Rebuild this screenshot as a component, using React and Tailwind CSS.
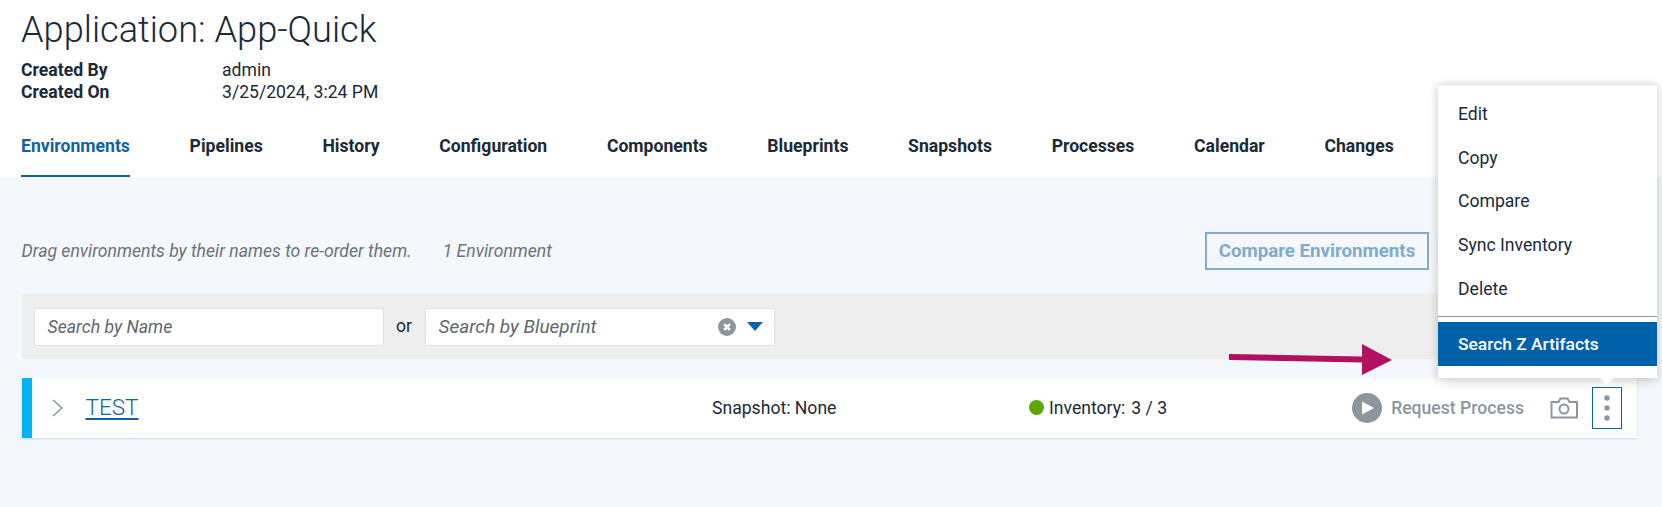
import React from 'react';

const tabs = ['Environments', 'Pipelines', 'History', 'Configuration', 'Components', 'Blueprints', 'Snapshots', 'Processes', 'Calendar', 'Changes'];
const menuItems = ['Edit', 'Copy', 'Compare', 'Sync Inventory', 'Delete'];

const Header = () => (
    <header className="h-[177px] bg-white pl-[21px] text-[#1a2a38]">
        <h1 className="pt-[8px] text-[36.200px] leading-[44px] font-light">Application: App-Quick</h1>
        <dl className="mt-[7px] grid grid-cols-[201px_1fr] text-[17.600px] leading-[22px]">
            <dt className="font-bold">Created By</dt>
            <dd>admin</dd>
            <dt className="font-bold">Created On</dt>
            <dd>3/25/2024, 3:24 PM</dd>
        </dl>
        <nav className="mt-[12px] flex gap-[59.700px]">
            {tabs.map((tab, i) => (
                <a
                    key={tab}
                    className={`flex h-[62px] items-center border-y-2 border-t-transparent text-[17.600px] font-bold ${i === 0 ? 'border-b-[#0f62a5] text-[#0f62a5]' : 'border-b-transparent'}`}
                >
                    {tab}
                </a>
            ))}
        </nav>
    </header>
);

const SearchBar = () => (
    <div className="mt-[24px] flex h-[65px] items-center bg-[#eeeeee] pl-[12px]">
        <div className="flex h-[38px] w-[350px] items-center border border-[#dfe3e6] bg-white pt-[2px] pl-[13px] text-[17.700px] text-[#5f676e] italic">
            Search by Name
        </div>
        <span className="w-[41px] text-center text-[17.600px] text-[#1a2a38]">or</span>
        <div className="flex h-[38px] w-[350px] items-center justify-between border border-[#dfe3e6] bg-white pr-[11px] pl-[13px] text-[19px] text-[#5f676e] italic">
            <span className="pt-[2px]">Search by Blueprint</span>
            <div className="flex items-center gap-[11px]">
                <svg width="18" height="18" viewBox="0 0 18 18">
                    <circle cx="9" cy="9" r="9" fill="#8d969e" />
                    <path d="M6.2 6.2l5.6 5.6M11.8 6.2l-5.6 5.6" stroke="#fff" strokeWidth="2.4" />
                </svg>
                <svg width="16" height="9" viewBox="0 0 16 9">
                    <path d="M0 0h16L8 9z" fill="#0f62a5" />
                </svg>
            </div>
        </div>
    </div>
);

const EnvironmentRow = () => (
    <div className="mt-[19px] flex h-[60px] items-center border-l-[10px] border-[#00b4ef] bg-white pr-[15px] text-[17.600px] text-[#1a2a38] shadow-[0_1px_2px_rgba(0,0,0,0.15)]">
        <div className="flex w-[680.500px] items-center">
            <svg className="ml-[20px]" width="12" height="18" viewBox="0 0 12 18" fill="none">
                <path d="M1 1l9 8-9 8" stroke="#8d969e" strokeWidth="1.5" />
            </svg>
            <a className="ml-[22px] text-[22.500px] font-light text-[#0f62a5] underline underline-offset-[3px]">TEST</a>
        </div>
        <div className="w-[317px]">Snapshot: None</div>
        <div className="flex items-center gap-[5px]">
            <span className="h-[15px] w-[15px] rounded-full bg-[#5ea700]" />
            <span>Inventory:<span className="ml-[6px]">3 / 3</span></span>
        </div>
        <div className="ml-auto flex items-center text-[#8d969e]">
            <svg width="30" height="30" viewBox="0 0 30 30">
                <circle cx="15" cy="15" r="15" fill="#8d969e" />
                <path d="M10 8.5l12 6.5-12 6.5z" fill="#fff" />
            </svg>
            <span className="ml-[9px] font-medium">Request Process</span>
            <svg className="ml-[26px]" width="28" height="22" viewBox="0 0 28 22" fill="none" stroke="#8d969e" strokeWidth="2">
                <path d="M1.5 5h7l2-3.500h7l2 3.500h7.500v15.500h-25.500z" />
                <circle cx="14" cy="12" r="4.500" />
            </svg>
            <button className="ml-[14px] flex h-[42px] w-[30px] items-center justify-center border-[1.5px] border-[#0f62a5]">
                <svg width="6" height="26" viewBox="0 0 6 26">
                    <circle cx="3" cy="3" r="2.700" fill="#8d969e" />
                    <circle cx="3" cy="13" r="2.700" fill="#8d969e" />
                    <circle cx="3" cy="23" r="2.700" fill="#8d969e" />
                </svg>
            </button>
        </div>
    </div>
);

const ActionMenu = () => (
    <div className="absolute top-[84px] left-[1438px] w-[219px] border-t border-[#e3e5e7] bg-white pb-[12px] text-[17.600px] text-[#1a2a38] shadow-[0_2px_10px_rgba(0,0,0,0.22)]">
        <ul className="pt-[7.300px]">
            {menuItems.map((item) => (
                <li key={item} className="flex h-[43.700px] items-center pl-[20px]">{item}</li>
            ))}
        </ul>
        <div className="mt-[5.700px] h-px bg-[#8d969e]" />
        <div className="mt-[5px] flex h-[44px] items-center bg-[#0061ab] pl-[20px] text-[17.400px] font-medium text-white">Search Z Artifacts</div>
        <div className="absolute -bottom-[7px] left-[161px] h-0 w-0 border-x-[8px] border-t-[8px] border-x-transparent border-t-white" />
    </div>
);

const Arrow = () => (
    <svg className="absolute top-[340px] left-[1225px]" width="172" height="40" viewBox="0 0 172 40">
        <path d="M4 14l133 2.500V4l30 16-30 15V22.500L4 20z" fill="#b0125f" />
    </svg>
);

const App = () => (
    <div className="relative flex h-[507px] w-full flex-col overflow-hidden bg-white font-['Roboto',sans-serif]">
        <Header />
        <main className="flex-1 bg-[#f4f7fb] pr-[25px] pl-[21.500px]">
            <div className="flex h-[93px] items-end">
                <div className="flex h-[38px] w-full items-center pr-[208px] text-[17.600px] text-[#6b7278] italic">
                    <span>Drag environments by their names to re-order them.</span>
                    <span className="ml-[31px]">1 Environment</span>
                    <button className="ml-auto h-[38px] w-[224px] border-2 border-[#7fabcf] text-[18.700px] font-bold text-[#7fabcf] not-italic">
                        Compare Environments
                    </button>
                </div>
            </div>
            <SearchBar />
            <EnvironmentRow />
        </main>
        <ActionMenu />
        <Arrow />
    </div>
);

export default App;
